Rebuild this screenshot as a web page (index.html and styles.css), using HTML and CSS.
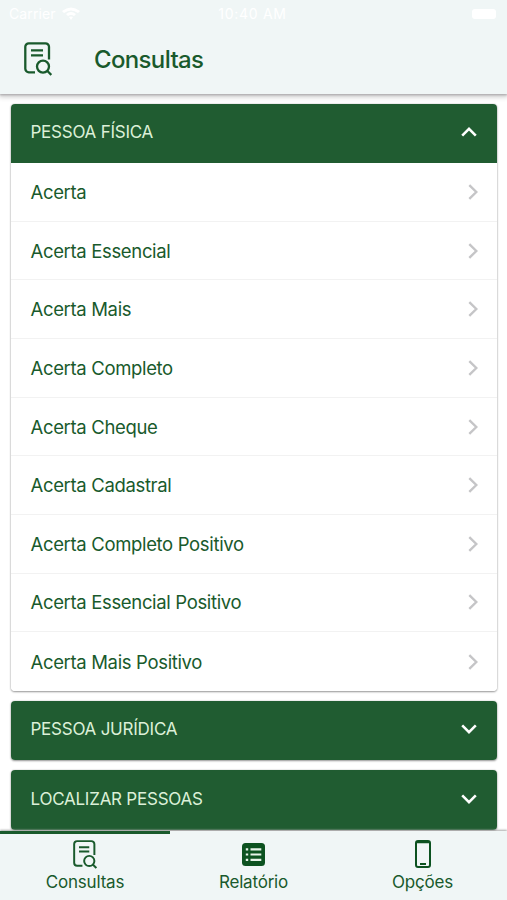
FILE: index.html
```html
<!DOCTYPE html>
<html lang="pt-BR">
<head>
<meta charset="utf-8">
<title>Consultas</title>
<link rel="stylesheet" href="styles.css">
</head>
<body>
<svg class="symbols" aria-hidden="true">
  <symbol id="search-doc" viewBox="0 0 28 34">
    <path d="M11 30.3H4.8A3.5 3.5 0 0 1 1.3 26.8V4.8A3.5 3.5 0 0 1 4.8 1.3H21.5A3.5 3.5 0 0 1 25 4.8V17.5M7 8.4H19M7 13.4H19"/>
    <circle cx="19" cy="24.6" r="6"/><path d="M23.2 28.8L27.3 32.9"/>
  </symbol>
  <symbol id="right" viewBox="0 0 10 16"><path d="M1.3 1.2L8.3 8L1.3 14.8"/></symbol>
  <symbol id="down" viewBox="0 0 16 10"><path d="M1.2 1.4L8 8.1L14.8 1.4"/></symbol>
</svg>
<div class="app">
  <header class="top">
    <div class="status">
      <div class="carrier"><span>Carrier</span><svg class="wifi" viewBox="0 0 18 13"><path d="M0 4Q9-3 18 4L16 6Q9 1 2 6ZM4 7Q9 3 14 7L12 9Q9 7 6 9ZM7 10Q9 9 11 10L9 13Z"/></svg></div>
      <span class="time">10:40 AM</span>
      <span class="battery"></span>
    </div>
    <div class="bar"><svg class="brand"><use href="#search-doc"/></svg><h1>Consultas</h1></div>
  </header>
  <main>
    <section class="card">
      <h2><span>PESSOA FÍSICA</span><svg class="down up"><use href="#down"/></svg></h2>
      <ul>
        <li><span>Acerta</span><svg><use href="#right"/></svg></li>
        <li><span>Acerta Essencial</span><svg><use href="#right"/></svg></li>
        <li><span>Acerta Mais</span><svg><use href="#right"/></svg></li>
        <li><span>Acerta Completo</span><svg><use href="#right"/></svg></li>
        <li><span>Acerta Cheque</span><svg><use href="#right"/></svg></li>
        <li><span>Acerta Cadastral</span><svg><use href="#right"/></svg></li>
        <li><span>Acerta Completo Positivo</span><svg><use href="#right"/></svg></li>
        <li><span>Acerta Essencial Positivo</span><svg><use href="#right"/></svg></li>
        <li><span>Acerta Mais Positivo</span><svg><use href="#right"/></svg></li>
      </ul>
    </section>
    <section class="card"><h2><span>PESSOA JURÍDICA</span><svg class="down"><use href="#down"/></svg></h2></section>
    <section class="card"><h2><span>LOCALIZAR PESSOAS</span><svg class="down"><use href="#down"/></svg></h2></section>
  </main>
  <nav>
    <a class="active"><svg class="i-doc"><use href="#search-doc"/></svg><span>Consultas</span></a>
    <a><svg class="i-list" viewBox="0 0 23 23"><rect width="23" height="23" rx="3.5"/><path d="M3.8 6.3H6.2M8.5 6.3H19.3M3.8 11.5H6.2M8.5 11.5H19.3M3.8 16.8H6.2M8.5 16.8H19.3"/></svg><span>Relatório</span></a>
    <a><svg class="i-phone" viewBox="0 0 16 28"><rect x="1" y="1" width="14" height="26" rx="2"/><path d="M1 2.2H15M5 24H11"/></svg><span>Opções</span></a>
  </nav>
</div>
</body>
</html>
```
FILE: styles.css
```css
* { box-sizing: border-box; }
body { margin: 0; background: #fff; color: #195a2c; font-family: Inter, "Liberation Sans", sans-serif; }
.symbols { position: absolute; width: 0; height: 0; }
.app { display: flex; flex-direction: column; width: 507px; height: 900px; overflow: hidden; }
svg { display: block; flex: none; fill: none; stroke: currentColor; }
.top { flex: none; height: 94px; background: #f0f6f6; box-shadow: 0 1px 2px #aaa7aa, 0 2px 5px 1px #ccc; }
.status { display: grid; grid-template-columns: 1fr auto 1fr; align-items: center; height: 27px; padding: 0 11px 0 9px; color: #fff; font-size: 14px; }
.time { letter-spacing: .7px; }
.carrier { display: flex; gap: 6px; align-items: center; letter-spacing: .1px; }
.wifi { width: 18px; height: 13px; fill: #fff; stroke: none; }
.battery { justify-self: end; width: 24px; height: 10px; border-radius: 3px; background: #fff; }
.bar { display: flex; align-items: center; height: 66px; padding-left: 23.5px; }
.brand { width: 28px; height: 34px; margin-top: -2px; stroke-width: 2.3; }
h1 { margin: 0 0 0 42.5px; font-size: 24px; font-weight: 500; line-height: 30px; letter-spacing: -.65px; }
main { flex: 1; min-height: 0; overflow: hidden; padding: 10px 10px 0 11px; display: flex; flex-direction: column; gap: 9.7px; }
.card { flex: none; border-radius: 4px; box-shadow: 0 1px 2px #999, 0 0 2px #ccc; }
h2 { display: flex; justify-content: space-between; align-items: center; height: 59.8px; margin: 0; padding: 0 20px 3px 19.5px; border-radius: 4px; background: #205c31; color: #dcf0d8; font-size: 17px; font-weight: 400; letter-spacing: -.24px; }
h2:not(:only-child) { height: 59.2px; border-radius: 4px 4px 0 0; }
.down { width: 16px; height: 10px; stroke: #fff; stroke-width: 2.6; }
.up { transform: rotate(180deg); }
ul { margin: 0; padding: 0; list-style: none; background: #fff; border-radius: 0 0 4px 4px; }
li { display: flex; justify-content: space-between; align-items: center; height: 58.65px; padding: 0 19.5px 0 19.5px; border-bottom: 1px solid #f2f2f2; font-size: 18.5px; letter-spacing: -.34px; }
li:last-child { border: 0; }
li svg { width: 10px; height: 16px; color: #c5c5c7; stroke-width: 2.4; }
nav { flex: none; display: grid; grid-template-columns: repeat(3, 1fr); height: 69px; position: relative; background: #f0f6f6; box-shadow: 0 -1px 2px #aaa; }
nav a { display: flex; flex-direction: column; align-items: center; border-top: 3px solid transparent; font-size: 17px; line-height: 20px; padding-top: 6px; letter-spacing: -.2px; }
nav .active { border-color: #195a2c; margin-right: -1px; }
nav span { margin-top: auto; margin-bottom: 8px; }
.i-doc { width: 24px; height: 29px; stroke-width: 2.3; }
.i-list { width: 23px; height: 23px; margin-top: 3px; fill: #0c5220; stroke: none; }
.i-list path { stroke: #e7f3e9; stroke-width: 2.2; }
.i-phone { width: 16px; height: 28px; stroke-width: 2; stroke: #0c5220; }
```
